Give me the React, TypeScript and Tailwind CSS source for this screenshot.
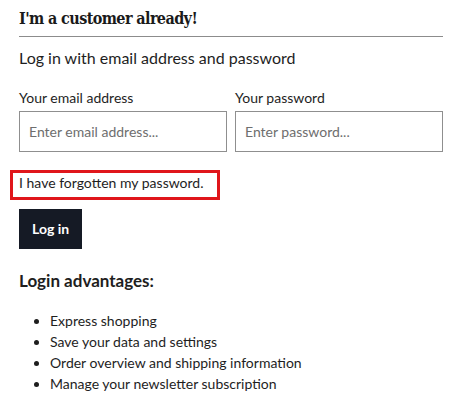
import React from "react";

export default function App() {
  const items = [
    "Express shopping",
    "Save your data and settings",
    "Order overview and shipping information",
    "Manage your newsletter subscription",
  ];
  return (
    <div className="w-[463px] h-[416px] bg-white pl-[19px] pr-[20px] font-['Lato',sans-serif] text-[#1e1e1e] overflow-hidden">
      <div className="pt-[7px] pb-[5px] border-b border-[#8c8c8c]">
        <h2 className="font-['DejaVu_Serif',serif] [font-stretch:condensed] font-bold text-[16px] leading-[24px] tracking-[-0.6px] text-[#1a1a1a]">
          I'm a customer already!
        </h2>
      </div>
      <p className="mt-[9px] text-[16px] leading-[24px]">Log in with email address and password</p>
      <div className="mt-[18px] grid grid-cols-2 gap-x-[8px]">
        <div className="flex flex-col gap-[3px]">
          <label className="text-[14px] leading-[20px]">Your email address</label>
          <input
            type="email"
            placeholder="Enter email address..."
            className="h-[41px] border border-[#8f8f8f] pl-[9px] text-[14px] font-['Lato',sans-serif] placeholder:text-[#6e6e6e] outline-none"
          />
        </div>
        <div className="flex flex-col gap-[3px]">
          <label className="text-[14px] leading-[20px]">Your password</label>
          <input
            type="password"
            placeholder="Enter password..."
            className="h-[41px] border border-[#8f8f8f] pl-[9px] text-[14px] font-['Lato',sans-serif] placeholder:text-[#6e6e6e] outline-none"
          />
        </div>
      </div>
      <div className="mt-[18px] -ml-[9px] w-[210px] h-[30px] border-[3px] border-[#e0161b] pl-[6px] pt-[1px]">
        <a className="block text-[14px] leading-[17px] text-[#1e1e1e]">I have forgotten my password.</a>
      </div>
      <button className="mt-[9px] h-[40px] px-[13px] bg-[#151a25] text-white font-bold text-[14px] leading-[20px]">
        Log in
      </button>
      <h3 className="mt-[20px] font-bold text-[17px] leading-[24px]">Login advantages:</h3>
      <ul className="mt-[17px] list-disc pl-[31px] text-[14px] leading-[21px]">
        {items.map((t) => (
          <li key={t}>{t}</li>
        ))}
      </ul>
    </div>
  );
}
